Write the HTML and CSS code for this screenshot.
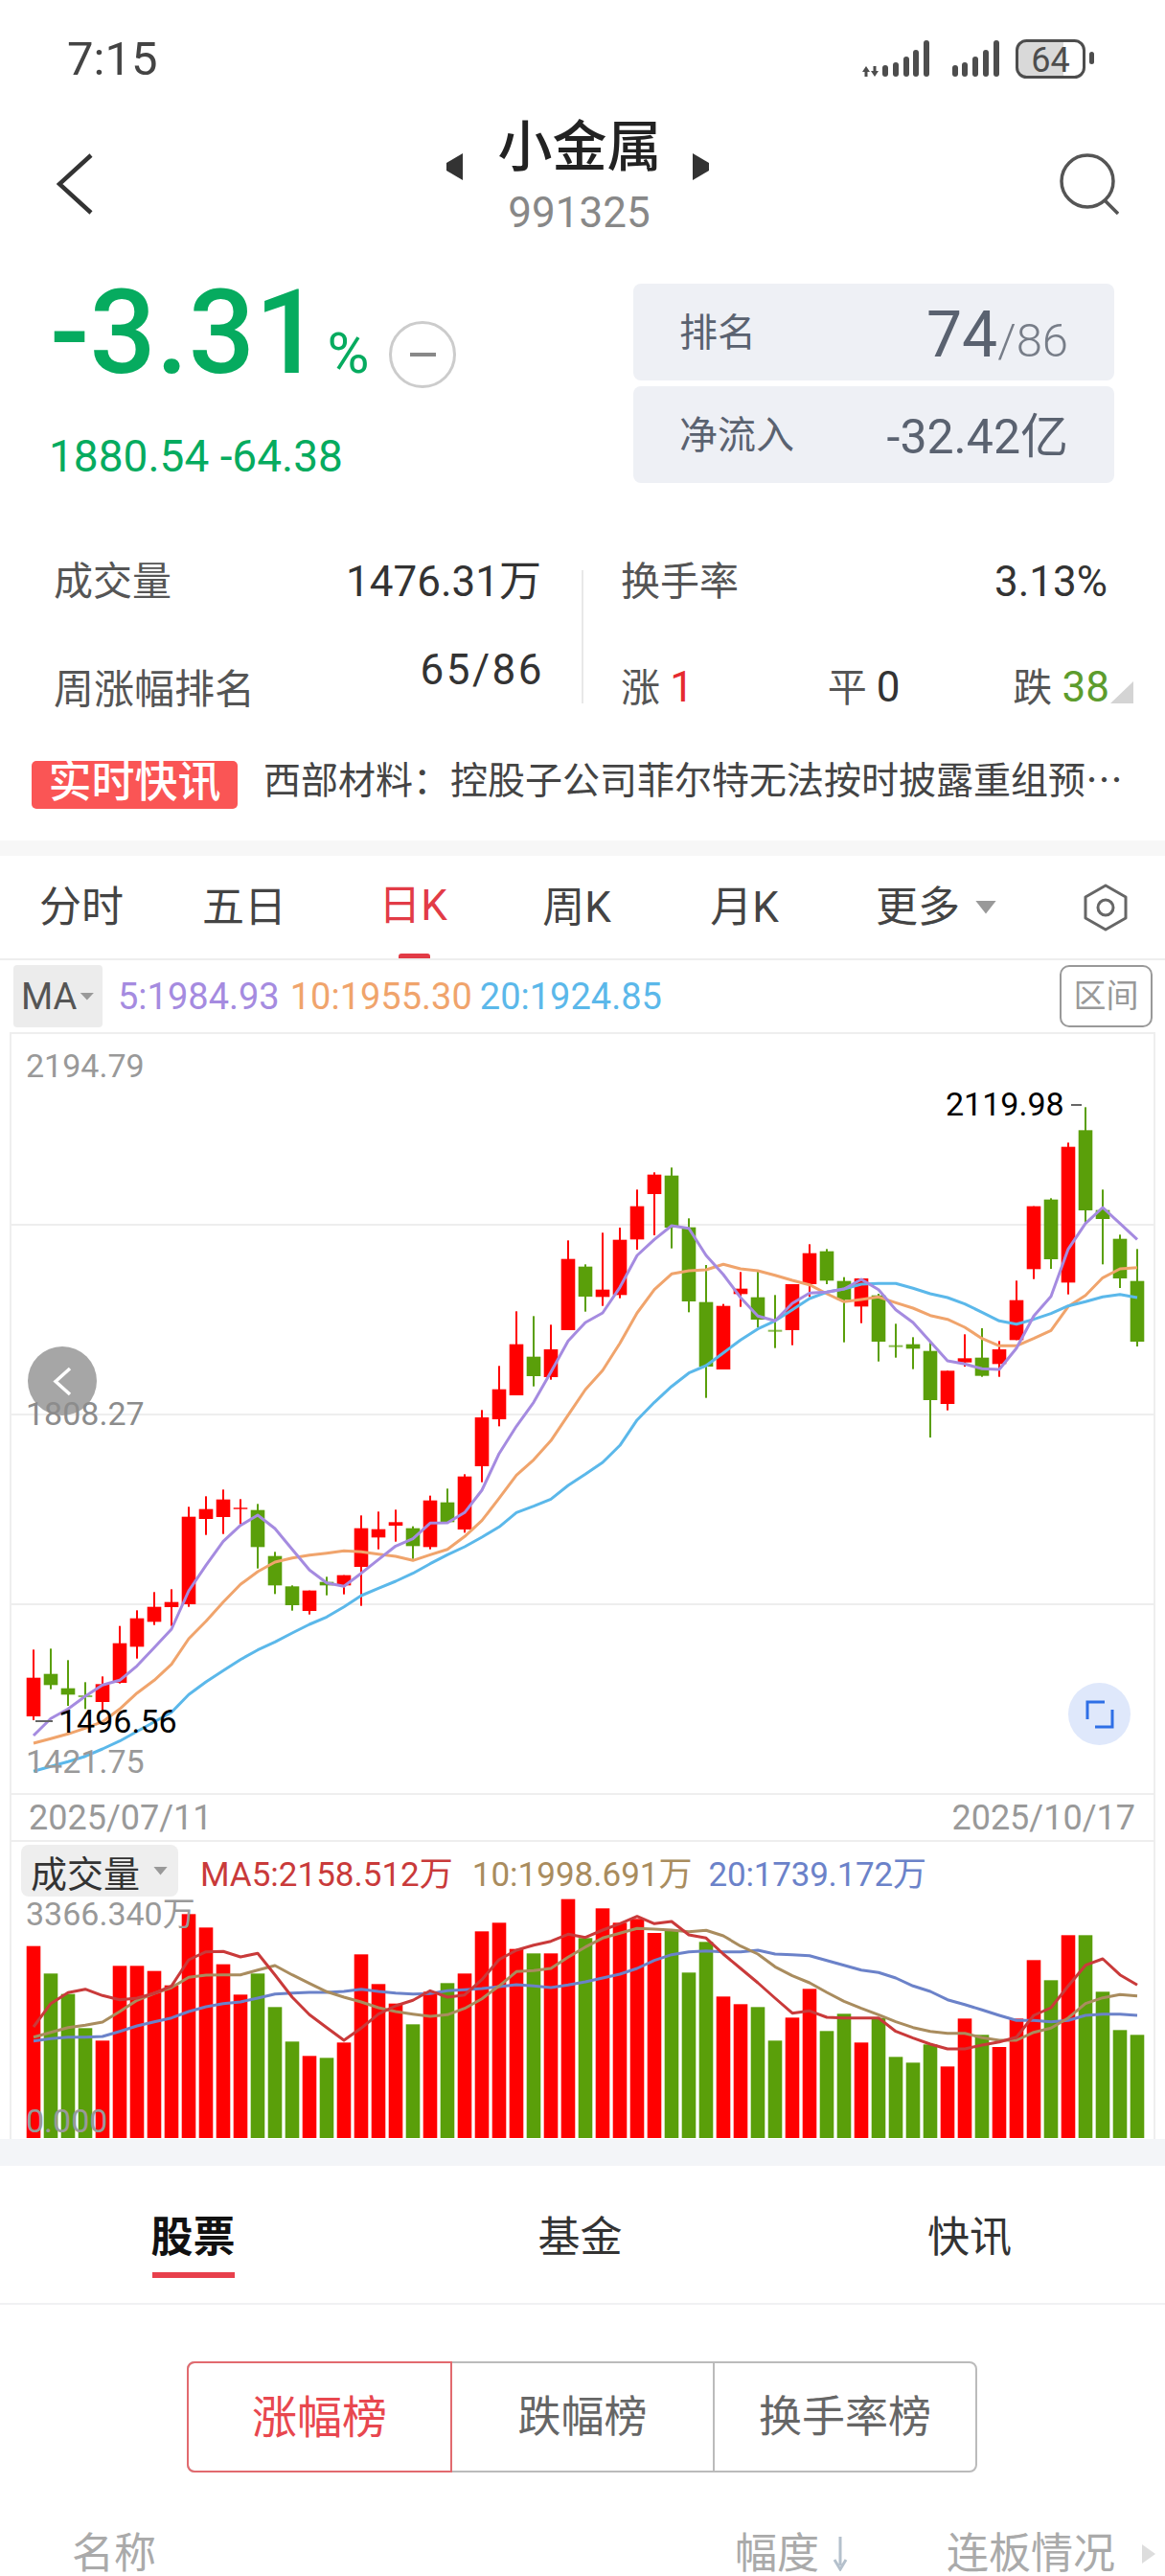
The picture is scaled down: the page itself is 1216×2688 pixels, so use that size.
FILE: index.html
```html
<!DOCTYPE html>
<html lang="zh-CN">
<head>
  <meta charset="UTF-8">
  <meta name="viewport" content="width=device-width, initial-scale=1.0">
  <title>小金属</title>
  <link rel="stylesheet" href="styles.css">
</head>
<body>
  <!-- Status bar -->
  <div class="status">
    <span class="clock">7:15</span>
    <svg class="status-icons" width="242" height="44" viewBox="900 40 242 44">
      <g fill="#4d4d4d">
        <path d="M904 69l-4 6h2.500v5h3v-5h2.500zM913 80l4-6h-2.500v-5h-3v5h-2.500z"/>
        <rect x="921" y="68" width="6" height="12" rx="3"/>
        <rect x="932" y="65" width="6" height="15" rx="3"/>
        <rect x="943" y="59" width="6" height="21" rx="3"/>
        <rect x="953" y="52" width="6" height="28" rx="3"/>
        <rect x="964" y="42" width="6" height="38" rx="3"/>
        <rect x="994" y="68" width="6" height="12" rx="3"/>
        <rect x="1004" y="65" width="6" height="15" rx="3"/>
        <rect x="1015" y="59" width="6" height="21" rx="3"/>
        <rect x="1026" y="52" width="6" height="28" rx="3"/>
        <rect x="1037" y="42" width="6" height="38" rx="3"/>
      </g>
      <path d="M1110 43h-38a10 10 0 0 0-10 10v17a10 10 0 0 0 10 10h38z" fill="#d9d9d9"/>
      <rect x="1061.500" y="42.500" width="70" height="38" rx="10" fill="none" stroke="#4d4d4d" stroke-width="3"/>
      <rect x="1137" y="54" width="5" height="13" rx="2.500" fill="#4d4d4d"/>
      <text class="battery-level" x="1096.500" y="75" text-anchor="middle">64</text>
    </svg>
  </div>

  <!-- Title -->
  <div class="head">
    <svg class="back" width="40" height="66" viewBox="0 0 40 66"><polyline points="36,3 3,33 36,63" fill="none" stroke="#333" stroke-width="4.500"/></svg>
    <div class="title-box">
      <div class="title-row">
        <svg class="title-arrow" width="21" height="28" viewBox="0 0 21 28"><polygon points="21,0 4,10 4,18 21,28" fill="#333"/></svg>
        <h1 class="title">小金属</h1>
        <svg class="title-arrow" width="21" height="28" viewBox="0 0 21 28"><polygon points="0,0 17,10 17,18 0,28" fill="#333"/></svg>
      </div>
      <div class="code">991325</div>
    </div>
    <svg class="search" width="62" height="64" viewBox="0 0 62 64">
      <circle cx="29" cy="29" r="27" fill="none" stroke="#555" stroke-width="3.500"/>
      <line x1="47" y1="49" x2="61" y2="63" stroke="#555" stroke-width="3.500"/>
    </svg>
  </div>

  <!-- Change and rank -->
  <div class="summary">
    <div class="change">
      <div class="change-row">
        <span class="change-big">-3.31</span>
        <span class="change-pct">%</span>
        <span class="change-circle"><i></i></span>
      </div>
      <div class="change-small">1880.54 -64.38</div>
    </div>
    <div class="rank">
      <div class="rank-box">
        <span class="rank-label">排名</span>
        <span class="rank-value">74<small>/86</small></span>
      </div>
      <div class="rank-box">
        <span class="rank-label">净流入</span>
        <span class="rank-flow">-32.42亿</span>
      </div>
    </div>
  </div>

  <!-- Volume stats -->
  <div class="stats">
    <div class="stats-col stats-left">
      <div class="stats-row">
        <span class="stat-label">成交量</span>
        <span class="stat-value">1476.31万</span>
      </div>
      <div class="stats-row stats-row-week">
        <span class="stat-label stat-label-low">周涨幅排名</span>
        <span class="stat-value stat-ratio">65/86</span>
      </div>
    </div>
    <div class="stats-divider"></div>
    <div class="stats-col stats-right">
      <div class="stats-row">
        <span class="stat-label">换手率</span>
        <span class="stat-value">3.13%</span>
      </div>
      <div class="stats-row stats-row-count">
        <span class="stat-label">涨 <b class="count-up">1</b></span>
        <span class="stat-label stat-flat">平 <b class="count-flat">0</b></span>
        <span class="stat-label stat-fall">跌 <b class="count-down">38</b></span>
        <i class="corner"></i>
      </div>
    </div>
  </div>

  <!-- News ticker -->
  <div class="news">
    <span class="news-badge">实时快讯</span>
    <span class="news-text">西部材料&#xFF1A;控股子公司菲尔特无法按时披露重组预…</span>
  </div>

  <div class="band"></div>

  <!-- Period tabs -->
  <div class="periods">
    <span class="period">分时</span>
    <span class="period">五日</span>
    <span class="period period-on">日K</span>
    <span class="period">周K</span>
    <span class="period">月K</span>
    <div class="period-more">
      <span class="period-name">更多</span>
      <i class="caret"></i>
      <svg class="hex" width="46" height="50" viewBox="0 0 46 50">
        <polygon points="23,2 44,14 44,36 23,48 2,36 2,14" fill="none" stroke="#666" stroke-width="3" stroke-linejoin="round"/>
        <circle cx="23" cy="25" r="8" fill="none" stroke="#666" stroke-width="3"/>
      </svg>
    </div>
  </div>

  <!-- MA legend -->
  <div class="ma-row">
    <span class="ma-pick">MA<i class="caret caret-small"></i></span>
    <span class="ma ma5">5:1984.93</span>
    <span class="ma ma10">10:1955.30</span>
    <span class="ma ma20">20:1924.85</span>
    <span class="range-btn">区间</span>
  </div>

  <!-- Chart -->
  <div class="chart">
    <div class="price-plot">
      <svg id="priceChart" class="plot-svg"></svg>
      <span class="back-btn">
        <svg width="20" height="31" viewBox="0 0 20 31"><polyline points="18,2 3,15.500 18,29" fill="none" stroke="#fff" stroke-width="3.500"/></svg>
      </span>
      <span class="axis axis-top">2194.79</span>
      <span class="axis axis-mid">1808.27</span>
      <span class="axis axis-low">1421.75</span>
      <span class="extreme extreme-high">2119.98</span>
      <i class="tick tick-high"></i>
      <span class="extreme extreme-low">1496.56</span>
      <i class="tick tick-low"></i>
      <span class="full-btn">
        <svg width="30" height="30" viewBox="0 0 30 30">
          <path d="M2 20V2h18M28 10v18H10" fill="none" stroke="#2f6fe6" stroke-width="3"/>
        </svg>
      </span>
    </div>
    <div class="dates">
      <span>2025/07/11</span>
      <span>2025/10/17</span>
    </div>
    <div class="vol-legend">
      <span class="vol-pick">成交量<i class="caret caret-vol"></i></span>
      <span class="vol-ma vol-ma5">MA5:2158.512万</span>
      <span class="vol-ma vol-ma10">10:1998.691万</span>
      <span class="vol-ma vol-ma20">20:1739.172万</span>
    </div>
    <div class="vol-plot">
      <svg id="volChart" class="plot-svg"></svg>
      <span class="axis vol-top">3366.340万</span>
      <span class="axis vol-zero">0.000</span>
    </div>
  </div>

  <div class="band band-wide"></div>

  <!-- List tabs -->
  <div class="list-tabs">
    <div class="list-tab list-tab-on">股票<i></i></div>
    <div class="list-tab">基金</div>
    <div class="list-tab">快讯</div>
  </div>

  <div class="segment">
    <span class="seg seg-on">涨幅榜</span>
    <span class="seg">跌幅榜</span>
    <span class="seg">换手率榜</span>
  </div>

  <div class="table-head">
    <span class="col-name">名称</span>
    <span class="col-rate">幅度<svg width="16" height="36" viewBox="0 0 16 36"><path d="M8 0v30M2 24l6 10 6-10" fill="none" stroke="#b4c0cc" stroke-width="3"/></svg></span>
    <span class="col-board">连板情况</span>
    <i class="col-more"></i>
  </div>

  <script src="chart.js"></script>
</body>
</html>
```

FILE: styles.css
```css
* {
  box-sizing: border-box;
}

html, body {
  margin: 0;
  padding: 0;
}

body {
  width: 1216px;
  height: 2688px;
  overflow: hidden;
  background: #fff;
  color: #333;
  font-family: Roboto, "Noto Sans CJK SC", sans-serif;
}

i {
  font-style: normal;
}

/* Status bar */
.status {
  height: 124px;
  display: flex;
  justify-content: space-between;
  align-items: center;
  padding: 0 74px 0 70px;
}

.clock {
  font-size: 49px;
  line-height: 60px;
  color: #444;
}

.battery-level {
  font-size: 36px;
  fill: #4d4d4d;
}

/* Title */
.head {
  height: 136px;
  display: flex;
  justify-content: space-between;
  align-items: center;
  padding: 0 48px;
}

.back {
  margin-left: 11px;
}

.title-box {
  align-self: flex-start;
  display: flex;
  flex-direction: column;
  align-items: center;
}

.title-row {
  display: flex;
  align-items: flex-start;
}

.title-arrow {
  margin-top: 36px;
}

.title {
  margin: 0 32px 0 37px;
  font-size: 57px;
  font-weight: 500;
  line-height: 60px;
  color: #222;
}

.code {
  margin: 12px 0 0 4px;
  font-size: 44px;
  line-height: 44px;
  color: #888;
}

/* Change and rank */
.summary {
  display: flex;
  justify-content: space-between;
  padding: 36px 53px 0 52px;
}

.change-row {
  display: flex;
  align-items: baseline;
}

.change-big {
  font-size: 122px;
  font-weight: 500;
  line-height: 104px;
  color: #06ab5f;
}

.change-pct {
  margin-left: 6px;
  font-size: 60px;
  color: #06ab5f;
}

.change-circle {
  align-self: flex-start;
  width: 70px;
  height: 70px;
  margin: 39px 0 0 21px;
  display: flex;
  justify-content: center;
  align-items: center;
  border: 3px solid #ccc;
  border-radius: 50%;
}

.change-circle i {
  width: 27px;
  height: 4px;
  background: #888;
}

.change-small {
  margin: 49px 0 0 -1px;
  font-size: 46px;
  line-height: 44px;
  color: #06ab5f;
}

.rank {
  width: 502px;
  display: flex;
  flex-direction: column;
  gap: 6px;
}

.rank-box {
  height: 101px;
  display: flex;
  justify-content: space-between;
  align-items: center;
  padding: 0 48px 0 48px;
  border-radius: 8px;
  background: #eef0f5;
  color: #5a6270;
}

.rank-label {
  margin-bottom: 6px;
  font-size: 40px;
}

.rank-value {
  margin-top: 5px;
  font-size: 66px;
}

.rank-value small {
  font-size: 49px;
  font-weight: 300;
  color: #777d88;
}

.rank-flow {
  margin-bottom: 6px;
  font-size: 50px;
}

/* Volume stats */
.stats {
  display: flex;
  margin-top: 81px;
  padding-left: 56px;
}

.stats-col {
  display: flex;
  flex-direction: column;
}

.stats-left {
  width: 509px;
}

.stats-right {
  width: 508px;
}

.stats-divider {
  width: 2px;
  height: 139px;
  margin: 10px 39px 0 42px;
  background: #e8e8e8;
}

.stats-row {
  position: relative;
  display: flex;
  justify-content: space-between;
  align-items: flex-start;
}

.stats-row-week {
  margin-top: 48px;
}

.stats-row-count {
  margin-top: 66px;
}

.stat-label {
  font-size: 41px;
  line-height: 44px;
  color: #555;
}

.stat-label b {
  font-weight: 400;
  font-size: 44px;
}

.stat-label-low {
  margin-top: 21px;
  font-size: 42px;
}

.stat-flat {
  margin-left: 22px;
}

.stat-fall {
  margin-right: -2px;
}

.stat-value {
  font-size: 44px;
  line-height: 44px;
  color: #333;
}

.stat-ratio {
  margin-right: -3px;
  letter-spacing: 2.500px;
}

.count-up {
  color: #e62a2f;
}

.count-flat {
  color: #333;
}

.count-down {
  color: #5d9c2d;
}

.corner {
  position: absolute;
  right: -27px;
  top: 16px;
  width: 24px;
  height: 23px;
  background: #d4d4d4;
  clip-path: polygon(100% 0, 100% 100%, 0 100%);
}

/* News ticker */
.news {
  display: flex;
  align-items: center;
  margin-top: 52px;
  padding-left: 33px;
}

.news-badge {
  width: 215px;
  height: 50px;
  border-radius: 5px;
  background: #fa5555;
  color: #fff;
  font-size: 45px;
  font-weight: 500;
  line-height: 46px;
  text-align: center;
  white-space: nowrap;
}

.news-text {
  margin: 0 0 16px 27px;
  font-family: "Noto Sans CJK SC", sans-serif;
  font-size: 39px;
  line-height: 34px;
  color: #444;
  white-space: nowrap;
}

.band {
  height: 16px;
  margin-top: 33px;
  background: #f7f7f7;
}

/* Period tabs */
.periods {
  height: 109px;
  display: grid;
  grid-template-columns: 170px 170px 182px 160px 190px 1fr;
  align-items: center;
  border-bottom: 2px solid #eee;
}

.period,
.period-name {
  font-size: 44px;
  line-height: 50px;
  text-align: center;
  color: #444;
}

.period-on {
  position: relative;
  height: 107px;
  line-height: 105px;
  color: #e23b46;
}

.period-on::after {
  content: "";
  position: absolute;
  left: 76px;
  bottom: 0;
  width: 33px;
  height: 5px;
  border-radius: 3px 3px 0 0;
  background: #e23b46;
}

.period-more {
  display: flex;
  align-items: center;
  padding: 0 39px 0 42px;
}

.caret {
  width: 22px;
  height: 14px;
  margin-left: 16px;
  background: #999;
  clip-path: polygon(0 0, 100% 0, 50% 100%);
}

.hex {
  margin-left: auto;
}

/* MA legend */
.ma-row {
  height: 75px;
  display: flex;
  align-items: center;
  padding: 0 13px 0 14px;
}

.ma-pick {
  width: 93px;
  height: 65px;
  display: flex;
  align-items: center;
  padding-left: 8px;
  border-radius: 4px;
  background: #ececec;
  color: #555;
  font-size: 38px;
}

.caret-small {
  width: 15px;
  height: 8px;
  margin-left: 3px;
}

.ma {
  font-size: 38px;
  white-space: nowrap;
}

.ma5 {
  margin-left: 16px;
  color: #a58be0;
}

.ma10 {
  margin-left: 11px;
  color: #f0a46c;
}

.ma20 {
  margin-left: 8px;
  color: #5bb8ea;
}

.range-btn {
  width: 97px;
  height: 65px;
  margin-left: auto;
  border: 2px solid #999;
  border-radius: 10px;
  color: #999;
  font-size: 34px;
  line-height: 60px;
  text-align: center;
}

/* Chart */
.chart {
  width: 1196px;
  height: 1155px;
  margin-left: 10px;
  border: 2px solid #eee;
  border-bottom: 0;
}

.price-plot {
  position: relative;
  height: 794px;
  border-bottom: 2px solid #eee;
}

.plot-svg {
  position: absolute;
  left: 0;
  top: 0;
  width: 100%;
  height: 100%;
  overflow: visible;
}

.axis {
  position: absolute;
  left: 15px;
  font-size: 34px;
  line-height: 36px;
  color: #999;
  white-space: nowrap;
}

.axis-top {
  top: 15px;
}

.axis-mid {
  top: 378px;
  color: #8c8c8c;
}

.axis-low {
  top: 741px;
}

.back-btn {
  position: absolute;
  left: 17px;
  top: 326px;
  width: 72px;
  height: 72px;
  display: flex;
  justify-content: center;
  align-items: center;
  border-radius: 50%;
  background: #a6a6a6;
}

.extreme {
  position: absolute;
  font-size: 34px;
  line-height: 36px;
  color: #000;
}

.extreme-high {
  left: 975px;
  top: 55px;
}

.extreme-low {
  left: 49px;
  top: 699px;
}

.tick {
  position: absolute;
  height: 2px;
  background: #666;
}

.tick-high {
  left: 1106px;
  top: 73px;
  width: 11px;
}

.tick-low {
  left: 25px;
  top: 716px;
  width: 18px;
}

.full-btn {
  position: absolute;
  left: 1103px;
  top: 677px;
  width: 65px;
  height: 65px;
  display: flex;
  justify-content: center;
  align-items: center;
  border-radius: 50%;
  background: #dfe8fb;
}

.dates {
  height: 49px;
  display: flex;
  justify-content: space-between;
  align-items: center;
  padding: 0 19px 0 18px;
  border-bottom: 2px solid #eee;
  color: #999;
  font-size: 36px;
}

.vol-legend {
  height: 60px;
  display: flex;
  align-items: center;
  padding-left: 10px;
}

.vol-pick {
  width: 164px;
  height: 54px;
  display: flex;
  align-items: center;
  padding-left: 10px;
  border-radius: 8px;
  background: #eee;
  color: #333;
  font-size: 38px;
}

.caret-vol {
  width: 15px;
  height: 9px;
  margin-left: 14px;
}

.vol-ma {
  margin-left: 20px;
  font-size: 35px;
  white-space: nowrap;
}

.vol-ma5 {
  margin-left: 23px;
  color: #c93a3a;
}

.vol-ma10 {
  color: #a98c5e;
}

.vol-ma20 {
  margin-left: 17px;
  letter-spacing: -0.200px;
  color: #6b82c9;
}

.vol-plot {
  position: relative;
  height: 249px;
}

.vol-top {
  top: -3px;
}

.vol-zero {
  top: 213px;
}

.band-wide {
  height: 28px;
  margin-top: 0;
  background: #f3f5f8;
}

/* List tabs */
.list-tabs {
  height: 145px;
  display: grid;
  grid-template-columns: 403px 405px 408px;
  border-bottom: 2px solid #f0f1f3;
}

.list-tab {
  display: flex;
  flex-direction: column;
  align-items: center;
  padding-top: 53px;
  font-size: 44px;
  line-height: 44px;
  color: #333;
}

.list-tab-on {
  font-weight: 700;
  color: #111;
}

.list-tab-on i {
  width: 86px;
  height: 6px;
  margin-top: 14px;
  background: #e8404c;
}

.segment {
  width: 825px;
  height: 116px;
  display: flex;
  margin: 59px 0 0 195px;
  border: 2px solid #bbb;
  border-radius: 8px;
}

.seg {
  flex: 1;
  display: flex;
  justify-content: center;
  align-items: center;
  padding-bottom: 7px;
  border-left: 2px solid #bbb;
  color: #666;
  font-size: 45px;
}

.seg-on {
  flex: none;
  width: 277px;
  margin: -2px 0 -2px -2px;
  border: 2px solid #e26a6f;
  border-radius: 8px 0 0 8px;
  color: #e8474f;
  font-size: 47px;
}

.seg-on + .seg {
  border-left: 0;
}

.table-head {
  display: flex;
  align-items: center;
  margin-top: 63px;
  padding-left: 75px;
  color: #aaa;
  font-size: 44px;
  line-height: 44px;
}

.col-name {
  width: 692px;
}

.col-rate {
  width: 221px;
  display: flex;
  align-items: center;
}

.col-rate svg {
  margin-left: 14px;
}

.col-board {
  width: 179px;
}

.col-more {
  width: 14px;
  height: 20px;
  margin-left: 25px;
  background: #ddd;
  clip-path: polygon(0 0, 100% 50%, 0 100%);
}
```

FILE: chart.js
```js
// Measured data. Chart values are in thirds of a pixel so they stay integers.
const COL_X = 35 - 12; // first column centre, inside the chart frame
const COL_STEP = 18;
const BAR_W = 14.6;
const RED = '#ff0000';
const GREEN = '#5a9f0a';

// up, body top, body bottom, wick top, wick bottom
const candles = [
  [1,2012,2133,1924,2145],[0,2000,2035,1921,2048],[0,2045,2065,1957,2100],[0,2070,2070,2026,2110],
  [1,2032,2088,2008,2120],[1,1904,2028,1850,2030],[1,1826,1915,1801,1952],[1,1790,1837,1744,1847],
  [1,1775,1791,1735,1850],[1,1508,1782,1477,1790],[1,1484,1515,1444,1565],[1,1454,1509,1423,1562],
  [1,1482,1482,1453,1532],[0,1487,1603,1468,1670],[0,1631,1723,1618,1750],[0,1726,1785,1723,1802],
  [1,1739,1803,1739,1814],[0,1712,1723,1696,1754],[1,1691,1723,1691,1751],[1,1544,1665,1504,1787],
  [1,1547,1573,1492,1610],[1,1525,1536,1486,1586],[0,1544,1600,1538,1640],[1,1457,1603,1442,1610],
  [0,1463,1525,1420,1528],[1,1382,1548,1375,1558],[1,1197,1350,1174,1400],[1,1109,1203,1036,1225],
  [1,968,1128,865,1128],[0,1007,1068,880,1100],[1,984,1071,907,1079],[1,701,924,643,924],
  [0,725,819,718,866],[1,797,820,619,848],[1,641,814,603,824],[1,536,640,484,672],
  [1,437,498,430,627],[0,440,603,415,668],[0,602,834,574,868],[0,836,1038,720,1136],
  [1,848,1047,842,1047],[1,794,811,742,851],[0,821,891,738,915],[0,926,926,814,980],
  [1,780,924,780,971],[1,683,780,655,820],[0,677,769,670,780],[0,770,829,758,962],
  [1,762,850,762,902],[0,815,960,810,1022],[0,974,974,904,1010],[0,968,982,946,1046],
  [0,989,1143,960,1260],[1,1051,1155,1051,1175],[1,1012,1025,937,1038],[0,1010,1067,918,1070],
  [1,984,1030,958,1070],[1,830,955,769,955],[1,536,733,536,764],[0,515,702,511,732],
  [1,350,775,337,812],[0,298,549,226,590],[0,548,576,484,718],[0,638,762,625,792],
  [0,770,960,670,975]
];

const priceLines = [
  ['#f0a46c', [2217,2203,2188,2170,2150,2110,2060,2020,1970,1890,1835,1775,1720,1680,1650,1637,1628,1622,1615,1618,1625,1632,1645,1627,1610,1570,1520,1450,1378,1330,1270,1190,1110,1050,965,870,797,748,738,735,718,732,738,752,768,782,810,835,828,820,838,855,878,890,915,950,973,973,950,925,850,815,760,732,728]],
  ['#5bb8ea', [2305,2290,2275,2258,2235,2210,2180,2150,2120,2065,2025,1990,1955,1925,1900,1872,1845,1822,1790,1755,1732,1710,1685,1655,1627,1602,1572,1540,1495,1475,1453,1410,1375,1338,1285,1205,1150,1100,1058,1035,995,955,920,895,860,825,805,795,780,778,778,793,810,822,842,868,895,905,890,872,848,835,820,812,822]],
  ['#a58be0', [2193,2140,2110,2070,2035,2020,1975,1918,1860,1740,1660,1585,1535,1503,1545,1610,1675,1715,1726,1685,1642,1600,1577,1528,1527,1495,1425,1310,1225,1150,1055,958,900,870,790,690,640,597,605,690,750,822,880,895,840,808,805,795,765,797,860,900,960,1020,1030,1045,1047,980,880,818,670,590,540,590,640]]
];

// 1 = red, 0 = green, followed by the bar top
const volumes = [
  [1,455],[0,541],[0,605],[0,712],[1,751],[1,517],[1,517],[1,533],[1,578],[1,355],[1,397],[1,512],[1,607],
  [0,541],[0,646],[0,754],[1,799],[0,805],[1,757],[1,481],[1,574],[1,635],[0,700],[1,598],[0,571],[1,541],
  [1,409],[1,382],[1,464],[0,478],[1,478],[1,308],[0,430],[1,337],[1,382],[1,370],[1,414],[0,405],[0,538],
  [0,442],[1,613],[1,637],[0,646],[0,751],[1,679],[1,589],[0,721],[0,667],[1,757],[0,680],[0,802],[0,820],
  [0,763],[1,832],[1,682],[0,733],[1,771],[1,682],[1,499],[0,562],[1,421],[0,421],[0,598],[0,718],[0,733]
];

const volLines = [
  ['#6b82c9', [752,745,740,740,738,722,705,692,680,660,645,635,630,618,605,602,600,600,597,590,597,602,605,604,595,592,588,582,576,580,585,577,567,555,543,525,500,482,473,470,473,473,468,480,482,485,500,515,530,538,555,580,597,623,638,655,672,688,688,692,688,672,668,668,672]],
  ['#a98c5e', [740,725,710,703,693,660,625,603,585,553,546,545,545,530,516,545,572,598,615,630,648,660,668,675,670,650,620,580,535,532,525,490,458,430,415,400,402,405,410,406,423,455,480,520,548,570,600,628,650,670,692,710,722,728,728,742,750,750,725,712,680,635,617,607,611]],
  ['#c93a3a', [708,635,601,590,610,623,618,603,580,498,473,472,489,478,545,615,670,710,750,712,668,642,625,595,615,608,560,497,468,452,440,418,428,405,385,362,385,378,420,430,480,525,570,618,665,658,678,680,680,680,722,743,762,777,777,765,755,740,672,648,580,515,495,545,577]]
];

const colX = i => COL_X + COL_STEP * i;

function svgEl(parent, name, attrs) {
  const el = document.createElementNS('http://www.w3.org/2000/svg', name);
  for (const key in attrs) el.setAttribute(key, attrs[key]);
  parent.appendChild(el);
  return el;
}

function drawLine(svg, color, values, toY) {
  const points = values.map((v, i) => colX(i) + ',' + toY(v).toFixed(1)).join(' ');
  svgEl(svg, 'polyline', { points, fill: 'none', stroke: color, 'stroke-width': 3, 'stroke-linejoin': 'round' });
}

// Price chart, its top edge sits at y=1079
const price = document.getElementById('priceChart');
const priceY = v => v / 3 + 1;

[198, 396, 594].forEach(y => {
  svgEl(price, 'rect', { x: 0, y, width: 1192, height: 2, fill: '#eee' });
});

candles.forEach((c, i) => {
  const color = c[0] ? RED : GREEN;
  const x = colX(i);
  svgEl(price, 'rect', { x: x - 1, y: priceY(c[3]), width: 2, height: (c[4] - c[3]) / 3, fill: color });
  if (c[1] === c[2]) {
    // doji, just a thin bar
    svgEl(price, 'rect', { x: x - BAR_W / 2, y: priceY(c[1]) - 1, width: BAR_W, height: 2, fill: color, opacity: 0.7 });
  } else {
    svgEl(price, 'rect', { x: x - BAR_W / 2, y: priceY(c[1]), width: BAR_W, height: (c[2] - c[1]) / 3, fill: color });
  }
});

priceLines.forEach(line => drawLine(price, line[0], line[1], priceY));

// Volume chart, its top edge sits at y=1983
const vol = document.getElementById('volChart');
const volY = v => v / 3 - 103;

volumes.forEach((v, i) => {
  svgEl(vol, 'rect', {
    x: colX(i) - BAR_W / 2,
    y: volY(v[1]),
    width: BAR_W,
    height: 249 - volY(v[1]),
    fill: v[0] ? RED : GREEN
  });
});

volLines.forEach(line => drawLine(vol, line[0], line[1], volY));
```
